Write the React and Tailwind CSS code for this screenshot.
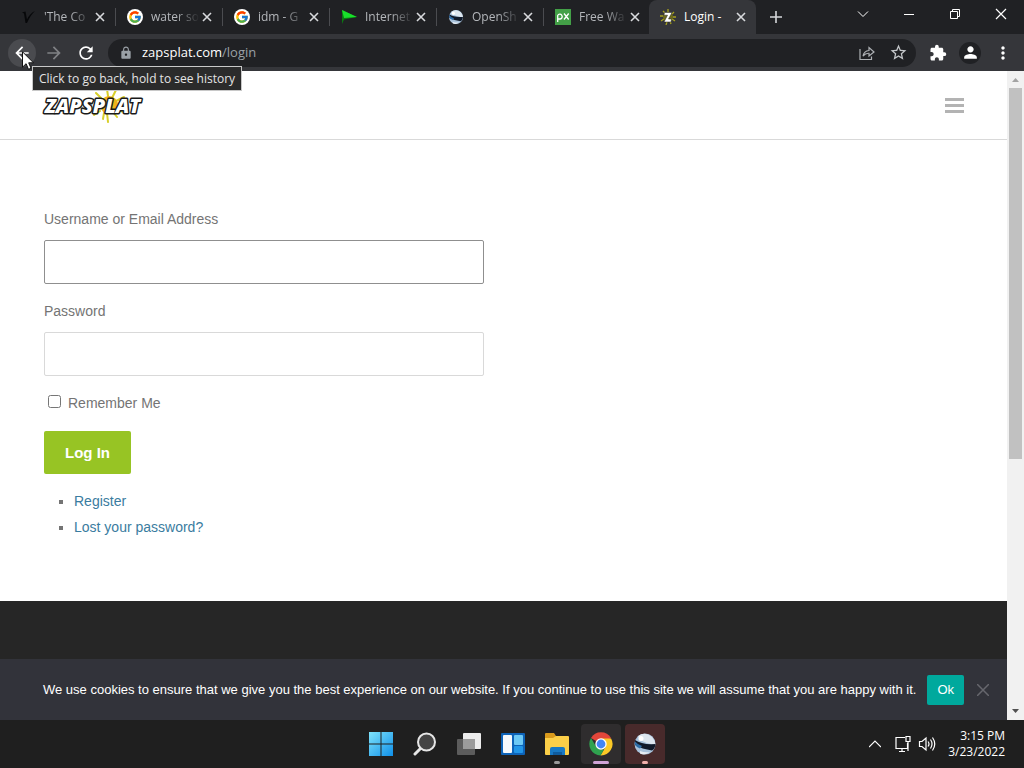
import { useState } from 'react';
import {
  MdArrowBack,
  MdArrowForward,
  MdRefresh,
  MdLock,
  MdStarBorder,
  MdExtension,
  MdPerson,
  MdMoreVert,
} from 'react-icons/md';
import { FcGoogle } from 'react-icons/fc';

/* ---------- favicons ---------- */

function VIcon() {
  return (
    <svg viewBox="0 0 16 16" className="size-4">
      <path d="M2 3.500 5.500 2.500 7 10.500Q10 4 15 2 10.500 6 7 14L5.500 14 4 4.500Z" fill="#07080a" />
    </svg>
  );
}

function FlagIcon() {
  return (
    <svg viewBox="0 0 16 16" className="size-4">
      <path d="M1 1 16 8 3 10.500 1 15Z" fill="#0b7a12" />
      <path d="M1 1 16 8 3 9Z" fill="#19e02b" />
    </svg>
  );
}

function OpenShotIcon({ className }) {
  return (
    <svg viewBox="0 0 24 24" className={className}>
      <circle cx="12" cy="12" r="10.500" fill="#a9c3dc" />
      <path d="M5 4Q12-1 19 5 23 10 22 13 14 12 7 8Z" fill="#dce6ef" />
      <path d="M2 8Q9 13 22.500 12 22 17 19 18.500 9 17 2 13Z" fill="#101a2a" />
      <path d="M2 9.500Q5 13 9 14L7 16.500Q3 15 1.700 12Z" fill="#2d6da8" />
      <path d="M7 19Q12 21 17 20 12 24 7 21.500Z" fill="#e7edf3" />
      <circle cx="8" cy="6.500" r="2.500" fill="#ffffff" />
    </svg>
  );
}

function PxIcon() {
  return (
    <svg viewBox="0 0 16 16" className="size-4">
      <rect width="16" height="16" fill="#43a047" />
      <g fill="none" stroke="#fff" strokeWidth="1.300">
        <path d="M2.700 13V6.500a2.400 2.400 0 1 1 2.400 3.500H2.700" />
        <path d="M9 4.500 13.700 10.500M13.700 4.500 9 10.500" />
      </g>
    </svg>
  );
}

function ZapIcon() {
  return (
    <svg viewBox="0 0 16 16" className="size-4">
      <path
        d="M8 0v3M3 2l2 2M0 7h3M1 12l3-2M6 16l1-3M11 15l-1-3M15 12l-3-2M16 8h-3M14 3l-2 2"
        stroke="#a6a11f"
        strokeWidth="1.300"
      />
      <circle cx="8" cy="8" r="5" fill="#6d6a1c" />
      <path d="M4.500 3.500H12L8.500 10H11.500L11 13H4L7.500 6.200H4Z" fill="#fff" stroke="#222" strokeWidth="0.500" />
    </svg>
  );
}

const TABS = [
  { title: "'The Co", icon: <VIcon /> },
  { title: 'water so', icon: <FcGoogle className="size-4 rounded-full bg-white p-px" /> },
  { title: 'idm - G', icon: <FcGoogle className="size-4 rounded-full bg-white p-px" /> },
  { title: 'Internet', icon: <FlagIcon /> },
  { title: 'OpenSh', icon: <OpenShotIcon className="size-4" /> },
  { title: 'Free Wa', icon: <PxIcon /> },
  { title: 'Login -', icon: <ZapIcon />, active: true },
];

function CloseGlyph() {
  return (
    <svg viewBox="0 0 10 10" className="size-[10px]" fill="none" stroke="currentColor" strokeWidth="1.600">
      <path d="M1 1 9 9M9 1 1 9" />
    </svg>
  );
}

function Tab({ title, icon, active }) {
  return (
    <div
      className={`flex w-[107px] min-w-0 items-center pl-[11px] pr-[10px] text-xs ${
        active
          ? '-ml-0.5 rounded-t-lg bg-[#35363a] text-white'
          : 'my-2 border-r border-[#4b4c50] text-[#b4b7bb]'
      }`}
    >
      <span className="shrink-0">{icon}</span>
      <button
        className={`ml-2 min-w-0 flex-1 whitespace-nowrap text-left ${
          active ? '' : 'mask-r-from-50% mask-r-to-95%'
        }`}
      >
        {title}
      </button>
      <button aria-label={`Close ${title}`} className="shrink-0 text-[#d8dadd]">
        <CloseGlyph />
      </button>
    </div>
  );
}

function TabStrip() {
  return (
    <div className="flex h-[34px] bg-[#202124] pl-[9px]">
      <nav className="flex items-stretch">
        {TABS.map((tab) => (
          <Tab key={tab.title} {...tab} />
        ))}
      </nav>
      <button aria-label="New tab" className="ml-[14px] text-[#d5d7da]">
        <svg viewBox="0 0 12 12" className="size-3" stroke="currentColor" strokeWidth="1.600">
          <path d="M6 0V12M0 6H12" />
        </svg>
      </button>
      <div className="ml-auto flex h-7 items-center gap-[34px] pr-[17px] text-white">
        <button aria-label="Search tabs">
          <svg viewBox="0 0 12 12" className="size-3" fill="none" stroke="currentColor">
            <path d="M1 3.500 6 8.500 11 3.500" />
          </svg>
        </button>
        <button aria-label="Minimize">
          <svg viewBox="0 0 12 12" className="size-3" stroke="currentColor">
            <path d="M1 6.500H11" />
          </svg>
        </button>
        <button aria-label="Restore">
          <svg viewBox="0 0 12 12" className="size-3" fill="none" stroke="currentColor">
            <path d="M1.500 3.500h7v7h-7ZM3.500 3.500v-2h7v7h-2" />
          </svg>
        </button>
        <button aria-label="Close">
          <svg viewBox="0 0 12 12" className="size-3" stroke="currentColor" strokeWidth="1.200">
            <path d="M1 1 11 11M11 1 1 11" />
          </svg>
        </button>
      </div>
    </div>
  );
}

function ShareIcon() {
  return (
    <svg viewBox="0 0 16 16" className="size-4" fill="none" stroke="#aeb1b5" strokeWidth="1.200">
      <path d="M1 4V14.500H12.500V11.500" />
      <path d="M4 11Q5 6 10 5.500V2.500L15 7 10 11V8.300Q6.500 8 4 11Z" />
    </svg>
  );
}

function Toolbar() {
  return (
    <div className="relative flex h-[37px] items-center bg-[#35363a] pl-2 pr-[11px]">
      <button aria-label="Back" className="flex size-7 items-center justify-center rounded-full bg-[#4a4b4f] text-white">
        <MdArrowBack size={20} />
      </button>
      <button aria-label="Forward" className="ml-2 text-[#808285]">
        <MdArrowForward size={20} />
      </button>
      <button aria-label="Reload" className="ml-3 text-white">
        <MdRefresh size={20} />
      </button>
      <div className="ml-3 flex h-7 min-w-0 flex-1 items-center rounded-full bg-[#202124] pl-[11px] pr-2">
        <MdLock size={14} className="shrink-0 text-[#9aa0a6]" />
        <a href="#login" className="ml-[9px] flex-1 text-[13px] text-[#9aa0a6]">
          <span className="text-white">zapsplat.com</span>/login
        </a>
        <button aria-label="Share this page">
          <ShareIcon />
        </button>
        <button aria-label="Bookmark this tab" className="ml-[14px] text-[#c4c7ca]">
          <MdStarBorder size={19} />
        </button>
      </div>
      <button aria-label="Extensions" className="ml-[13px] text-white">
        <MdExtension size={18} />
      </button>
      <button aria-label="Profile" className="ml-3 flex size-[22px] items-center justify-center rounded-full bg-[#202124] text-white">
        <MdPerson size={19} />
      </button>
      <button aria-label="Menu" className="ml-3 text-white">
        <MdMoreVert size={20} />
      </button>

      <div
        role="tooltip"
        className="absolute left-8 top-8 z-20 flex h-[25px] items-center whitespace-nowrap border border-[#c8c8c8] bg-[#2b2b2b] px-[6px] text-xs text-[#e4e4e4]"
      >
        Click to go back, hold to see history
      </div>
      <svg viewBox="0 0 12 19" className="absolute left-[22px] top-[17px] z-30 h-[19px] w-3">
        <path d="M.5.800V16.200L4.100 12.700 6.500 18.300 9 17.200 6.700 11.800H11.500Z" fill="#fff" stroke="#111" />
      </svg>
    </div>
  );
}

/* ---------- page ---------- */

function Logo() {
  return (
    <svg viewBox="0 0 108 36" className="h-9 w-[108px]" role="img" aria-label="Zapsplat">
      <g transform="translate(-3 1)">
        <path
          d="M68 1l1 7M77 2l-4 8M57 5l5 5M85 9l-8 4M55 27l6-4M64 31l1-6M69 34l-1-9M78 29l-4-5M84 24l-6-3"
          stroke="#d8cf2a"
          strokeWidth="2"
          strokeLinecap="round"
        />
        <circle cx="70" cy="17" r="9" fill="#efb31d" />
      </g>
      <text
        x="3"
        y="26"
        fontFamily="'Open Sans', sans-serif"
        fontWeight="800"
        fontStyle="italic"
        fontSize="20"
        fill="#fff"
        stroke="#1a1a1a"
        strokeWidth="3"
        strokeLinejoin="round"
        paintOrder="stroke"
      >
        ZAPSPLAT
      </text>
    </svg>
  );
}

function LoginForm() {
  const [remember, setRemember] = useState(false);

  return (
    <form className="max-w-[440px]" onSubmit={(e) => e.preventDefault()}>
      <label htmlFor="user" className="block">Username or Email Address</label>
      <input
        id="user"
        type="text"
        className="mt-2 block h-11 w-full rounded-xs border border-[#8f8f8f] px-3 outline-none"
      />
      <label htmlFor="pass" className="mt-[14px] block">Password</label>
      <input
        id="pass"
        type="password"
        className="mt-2 block h-11 w-full rounded-xs border border-[#d9d9d9] px-3 outline-none"
      />
      <div className="mt-[14px] flex items-center">
        <input
          id="remember"
          type="checkbox"
          checked={remember}
          onChange={(e) => setRemember(e.target.checked)}
          className="mb-1 ml-1 size-[13px]"
        />
        <label htmlFor="remember" className="ml-[7px]">Remember Me</label>
      </div>
      <button className="mt-[15px] block h-[43px] rounded-xs bg-[#97c424] px-[21px] text-[15px] font-bold text-white">
        Log In
      </button>
    </form>
  );
}

function CookieBar() {
  return (
    <div className="absolute inset-x-0 bottom-0 flex h-[61px] items-center justify-center bg-[#32333a] pl-[25px] font-['Liberation_Sans',Arial,sans-serif] text-[13px] text-white">
      <p>
        We use cookies to ensure that we give you the best experience on our website. If you continue to use this site we
        will assume that you are happy with it.
      </p>
      <button className="ml-[11px] h-[30px] rounded-xs bg-[#00a99d] px-[10px]">Ok</button>
      <button aria-label="Dismiss" className="ml-[13px] text-[#66676d]">
        <svg viewBox="0 0 12 12" className="size-3" stroke="currentColor" strokeWidth="1.500">
          <path d="M0 0 12 12M12 0 0 12" />
        </svg>
      </button>
    </div>
  );
}

function Scrollbar() {
  return (
    <div className="flex w-[17px] shrink-0 flex-col items-center bg-[#f1f1f1]">
      <svg viewBox="0 0 17 17" className="size-[17px] shrink-0">
        <path d="M5 11H12L8.500 7Z" fill="#a3a3a3" />
      </svg>
      <div className="h-[371px] w-[13px] bg-[#c1c1c1]" />
      <svg viewBox="0 0 17 17" className="mt-auto size-[17px] shrink-0">
        <path d="M5 6H12L8.500 10Z" fill="#505050" />
      </svg>
    </div>
  );
}

function WebPage() {
  return (
    <div className="flex min-h-0 flex-1 bg-white">
      <div className="relative flex min-w-0 flex-1 flex-col font-['Liberation_Sans',Arial,sans-serif] text-sm leading-[26px] text-[#747474]">
        <header className="flex h-[69px] shrink-0 items-center justify-between border-b border-[#d9d9d9] pl-[42px] pr-[43px]">
          <a href="#home"><Logo /></a>
          <button aria-label="Open menu" className="flex w-[19px] flex-col gap-[3px]">
            <span className="h-[3px] bg-[#b3b3b3]" />
            <span className="h-[3px] bg-[#b3b3b3]" />
            <span className="h-[3px] bg-[#b3b3b3]" />
          </button>
        </header>
        <main className="px-11 pb-[61px] pt-[66px]">
          <LoginForm />
          <ul className="mt-[14px] list-[square] pl-[30px]">
            <li><a href="#register" className="text-[#3a7ca0]">Register</a></li>
            <li><a href="#lost" className="text-[#3a7ca0]">Lost your password?</a></li>
          </ul>
        </main>
        <footer className="min-h-[61px] flex-1 bg-[#262626]" />
        <CookieBar />
      </div>
      <Scrollbar />
    </div>
  );
}

/* ---------- taskbar ---------- */

function StartIcon() {
  return (
    <svg viewBox="0 0 24 24" className="size-6">
      <defs>
        <linearGradient id="win" x1="0" y1="0" x2="1" y2="1">
          <stop offset="0" stopColor="#7fe3fb" />
          <stop offset="1" stopColor="#0f8fe8" />
        </linearGradient>
      </defs>
      <path d="M0 0H11.500V11.500H0ZM12.500 0H24V11.500H12.500ZM0 12.500H11.500V24H0ZM12.500 12.500H24V24H12.500Z" fill="url(#win)" />
    </svg>
  );
}

function SearchIcon() {
  return (
    <svg viewBox="0 0 24 24" className="size-6" fill="none" stroke="#e6e6e6">
      <path d="M8 16 2 22" strokeWidth="3" strokeLinecap="round" />
      <circle cx="13.500" cy="10" r="8.500" fill="#444" strokeWidth="2" />
    </svg>
  );
}

function TaskViewIcon() {
  return (
    <svg viewBox="0 0 24 24" className="size-6">
      <rect x="6" y="1" width="18" height="16" rx="1" fill="#ececec" />
      <rect x="0" y="7" width="18" height="16" rx="1" fill="#5c5c5c" />
      <path d="M6 7H18V17H6Z" fill="#9b9b9b" />
    </svg>
  );
}

function WidgetsIcon() {
  return (
    <svg viewBox="0 0 24 24" className="size-6">
      <rect y="1" width="24" height="22" rx="1" fill="#0d63b8" />
      <rect x="2" y="3" width="9" height="18" rx="1" fill="#f4f9fd" />
      <rect x="13" y="3" width="9" height="10" rx="1" fill="#6cc9f5" />
      <rect x="13" y="14" width="9" height="7" rx="1" fill="#2196e8" />
    </svg>
  );
}

function FolderIcon() {
  return (
    <svg viewBox="0 0 24 24" className="size-6">
      <path d="M0 2Q0 1 1 1H9L11 4H23V10H0Z" fill="#d99a1c" />
      <path d="M0 6H8L11 4H23Q24 4 24 5V22Q24 23 23 23H1Q0 23 0 22Z" fill="#fbcf48" />
      <path d="M5 23V17Q5 15 7 15H18Q20 15 20 17V23Z" fill="#1879c4" />
      <path d="M8 23V20H17V23Z" fill="#0f5c9e" />
    </svg>
  );
}

function ChromeIcon() {
  return (
    <svg viewBox="0 0 24 24" className="size-6">
      <path d="M12 12 2 6A11.500 11.500 0 0 1 22 6Z" fill="#e2463a" />
      <path d="M12 6.500H22.100A11.500 11.500 0 0 1 11.500 23.500L17 14Z" fill="#fbc926" />
      <path d="M2 6 7 14.500 12 17.500 15 17.500 11.500 23.500A11.500 11.500 0 0 1 2 6Z" fill="#2fa24f" />
      <circle cx="12" cy="12" r="5.700" fill="#fff" />
      <circle cx="12" cy="12" r="4.400" fill="#4285f4" />
    </svg>
  );
}

const APPS = [
  { name: 'Start', icon: <StartIcon /> },
  { name: 'Search', icon: <SearchIcon /> },
  { name: 'Task view', icon: <TaskViewIcon /> },
  { name: 'Widgets', icon: <WidgetsIcon /> },
  { name: 'File Explorer', icon: <FolderIcon />, mark: 'w-[6px] bg-[#9a9a9a]' },
  { name: 'Chrome', icon: <ChromeIcon />, tile: 'bg-[#2f2d2e]', mark: 'w-4 bg-[#cfa3d6]' },
  { name: 'OpenShot', icon: <OpenShotIcon className="size-6" />, tile: 'bg-[#482a2b]', mark: 'w-[6px] bg-[#f0b0ac]' },
];

function Taskbar() {
  return (
    <div className="grid h-12 shrink-0 grid-cols-[1fr_auto_1fr] items-center bg-[#1f1f1f] text-white">
      <nav className="col-start-2 flex gap-1 pl-0.5">
        {APPS.map(({ name, icon, tile = '', mark }) => (
          <button key={name} aria-label={name} className={`relative flex size-10 items-center justify-center rounded-sm ${tile}`}>
            {icon}
            {mark && <span className={`absolute bottom-0 h-[3px] rounded-full ${mark}`} />}
          </button>
        ))}
      </nav>
      <div className="flex items-center justify-end pr-[19px]">
        <button aria-label="Show hidden icons">
          <svg viewBox="0 0 12 12" className="size-3" fill="none" stroke="currentColor" strokeWidth="1.200">
            <path d="M0 9 6 3 12 9" />
          </svg>
        </button>
        <button aria-label="Network" className="ml-[13px]">
          <svg viewBox="0 0 18 18" className="size-[18px]" fill="none" stroke="currentColor" strokeWidth="1.200">
            <path d="M11 2.500H2V13.500H13.500V8M5 16.500H11M8 13.500V16.500" />
            <path d="M12 1.500H16V6.500H12ZM14 6.500V16" />
          </svg>
        </button>
        <button aria-label="Volume" className="ml-[6px]">
          <svg viewBox="0 0 18 18" className="size-[18px]" fill="none" stroke="currentColor" strokeWidth="1.200">
            <path d="M1.500 6.500H4L8 3V15L4 11.500H1.500Z" />
            <path d="M10 6.500Q12 9 10 11.500M12.500 4.500Q15.500 9 12.500 13.500M14.500 2.500Q19 9 14.500 15.500" />
          </svg>
        </button>
        <time className="ml-3 text-right text-xs leading-4">
          3:15 PM
          <br />
          3/23/2022
        </time>
      </div>
    </div>
  );
}

export default function App() {
  return (
    <div className="flex h-screen flex-col overflow-hidden font-['Open_Sans','Noto_Sans',sans-serif]">
      <TabStrip />
      <Toolbar />
      <WebPage />
      <Taskbar />
    </div>
  );
}
